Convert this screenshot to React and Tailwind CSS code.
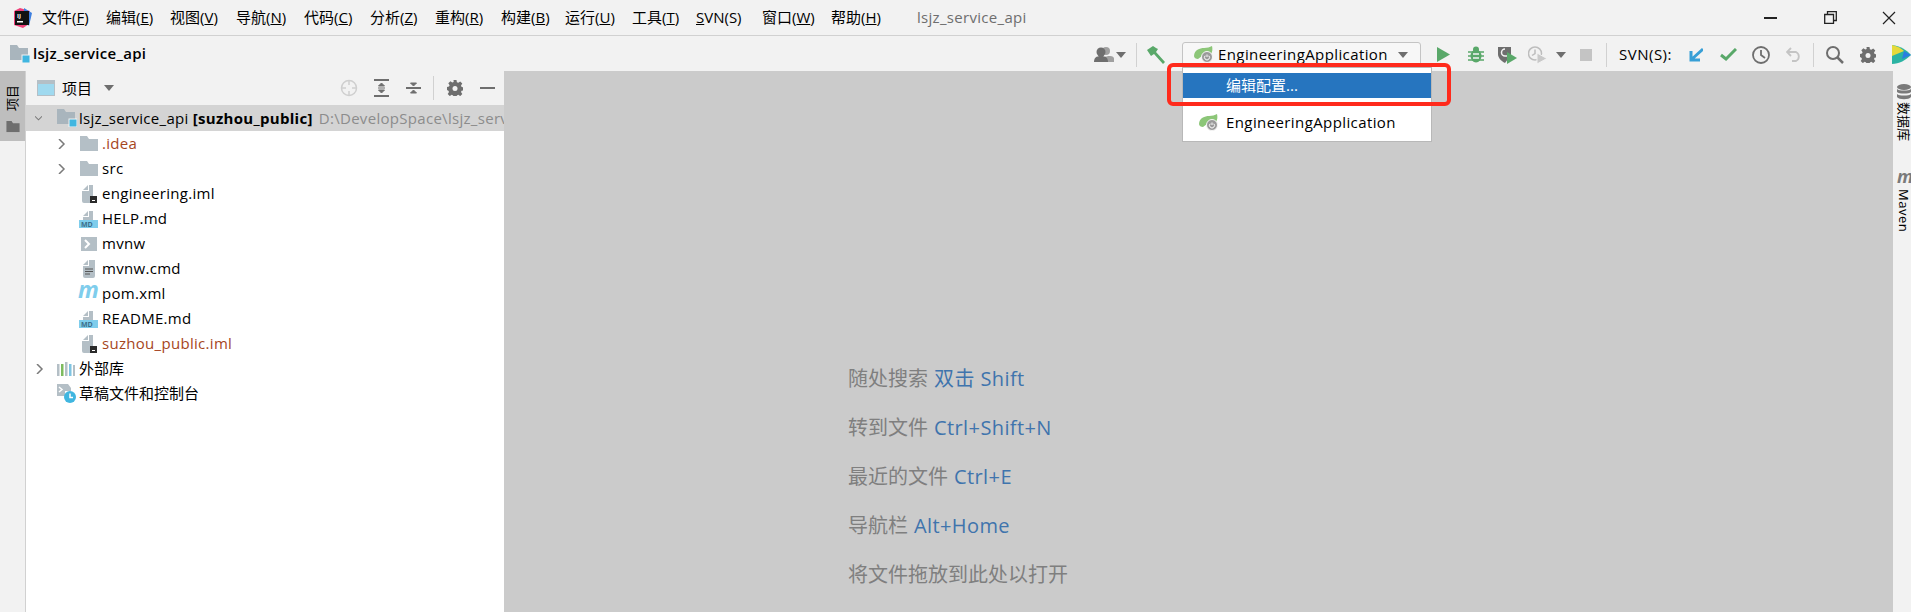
import React from "react";

const font = "font-['Open_Sans','Noto_Sans_CJK_SC',sans-serif]";

const menus = [
    ["文件(", "F", ")", "w-[47px]"],
    ["编辑(", "E", ")", "w-[47px]"],
    ["视图(", "V", ")", "w-[49px]"],
    ["导航(", "N", ")", "w-[51px]"],
    ["代码(", "C", ")", "w-[49px]"],
    ["分析(", "Z", ")", "w-[48px]"],
    ["重构(", "R", ")", "w-[49px]"],
    ["构建(", "B", ")", "w-[47px]"],
    ["运行(", "U", ")", "w-[50px]"],
    ["工具(", "T", ")", "w-[47px]"],
    ["", "S", "VN(S)", "w-[49px]"],
    ["窗口(", "W", ")", "w-[52px]"],
    ["帮助(", "H", ")", "w-[51px]"],
];

const Folder = ({ dark }) => (
    <svg width="18" height="15" viewBox="0 0 18 15">
        <path d="M0 0h7l2 3h9v12H0z" fill={dark ? "#6e6e6e" : "#b4bfc6"} />
    </svg>
);

const ModuleFolder = () => (
    <svg width="20" height="18" viewBox="0 0 20 18">
        <path d="M0 0h7l2 3h9v12H0z" fill="#a9b5bd" />
        <rect x="12" y="10" width="8" height="8" fill="#40b6e0" stroke="#f2f2f2" strokeWidth="1" />
    </svg>
);

const Iml = () => (
    <svg width="16" height="18" viewBox="0 0 16 18">
        <path d="M2 5l5-5v5z" fill="#b4bfc6" />
        <path d="M8 0h4v9H8zM1 6h7v3h4v3H9v6H3a2 2 0 0 1-2-2z" fill="#b4bfc6" />
        <rect x="9" y="11" width="7" height="7" fill="#2b2b2b" />
        <rect x="11" y="15" width="3" height="1" fill="#fff" />
    </svg>
);

const Md = () => (
    <svg width="19" height="18" viewBox="0 0 19 18">
        <path d="M4 6l5-5v5zM10 1h4v9H4V7h6z" fill="#b4bfc6" />
        <rect x="0" y="10" width="19" height="8" fill="#7fcdec" />
        <text x="2" y="17" fontSize="7" fontWeight="700" fill="#3d6f8a" fontFamily="Open Sans">MD</text>
    </svg>
);

const Script = () => (
    <svg width="18" height="14" viewBox="0 0 18 14">
        <rect width="16" height="14" x="1" fill="#b4bfc6" />
        <path d="M5 3l4 4-4 4" fill="none" stroke="#fff" strokeWidth="2" />
    </svg>
);

const Cmd = () => (
    <svg width="14" height="18" viewBox="0 0 14 18">
        <path d="M1 5l5-5v5z" fill="#b4bfc6" />
        <path d="M7 0h6v16a2 2 0 0 1-2 2H3a2 2 0 0 1-2-2V6h6z" fill="#b4bfc6" />
        <path d="M3 9h8M3 11.500h8M3 14h5" stroke="#555" strokeWidth="1" />
    </svg>
);

const Chevron = ({ open }) => (
    <svg width="10" height="10" viewBox="0 0 10 10">
        <path d={open ? "M0 2.500l5 5 5-5" : "M1 0l5 5-5 5"} fill="none" stroke="#7a7a7a" strokeWidth="1.500" />
    </svg>
);

const Libs = () => (
    <svg width="18" height="14" viewBox="0 0 18 14">
        <rect x="0" y="2" width="2.500" height="12" fill="#b4bfc6" />
        <rect x="4" y="2" width="2.500" height="12" fill="#7dbb5f" />
        <rect x="8" y="0" width="2.500" height="14" fill="#b4bfc6" />
        <rect x="12" y="2" width="2.500" height="12" fill="#7fc4e2" />
        <rect x="16" y="3" width="2" height="11" fill="#b4bfc6" />
    </svg>
);

const Scratch = () => (
    <svg width="19" height="19" viewBox="0 0 19 19">
        <path d="M0 0h11l3 4v3H8v5H0z" fill="#b4bfc6" />
        <path d="M2 3l3 2.500L2 8" fill="none" stroke="#fff" strokeWidth="1.500" />
        <circle cx="13" cy="13" r="6" fill="#40b6e0" />
        <path d="M13 9.500V13.500h3" fill="none" stroke="#fff" strokeWidth="1.500" />
    </svg>
);

const Spring = () => (
    <svg width="20" height="17" viewBox="0 0 20 17">
        <path d="M0 10C0 4 6 2 10 2c3 0 6-1 8-2 1 4 0 8-3 10H8l-4 3C2 13 0 12 0 10z" fill="#8cc678" />
        <circle cx="13" cy="11" r="5.500" fill="#9a9a9a" stroke="#f7f7f7" strokeWidth="1" />
        <path d="M13 8.500v2.500M11.200 9.700a2.500 2.500 0 1 0 3.600 0" fill="none" stroke="#fff" strokeWidth="1" />
    </svg>
);

const Gear = ({ size = 16 }) => (
    <svg width={size} height={size} viewBox="0 0 16 16">
        <path d="M6.500 0h3l.4 2.200 1.400.6L13.200 1.500l2.100 2.100-1.300 1.900.6 1.400 2.200.4v3l-2.200.4-.6 1.400 1.300 1.900-2.100 2.100-1.900-1.300-1.400.6-.4 2.200h-3l-.4-2.200-1.400-.6-1.900 1.300-2.100-2.100 1.300-1.900-.6-1.400L-.2 10V7l2.200-.4.6-1.400-1.300-1.900 2.100-2.100 1.900 1.300 1.400-.6z" fill="#6e6e6e" />
        <circle cx="8" cy="8.500" r="2.500" fill="#f2f2f2" />
    </svg>
);

const Caret = () => (
    <svg width="10" height="6" viewBox="0 0 10 6"><path d="M0 0h10L5 6z" fill="#6e6e6e" /></svg>
);

const Sep = () => <div className="w-px h-[24px] bg-[#d1d1d1]"></div>;

const rows = [
    { label: ".idea", icon: <Folder />, arrow: true, color: "text-[#a6461d]" },
    { label: "src", icon: <Folder />, arrow: true },
    { label: "engineering.iml", icon: <Iml /> },
    { label: "HELP.md", icon: <Md /> },
    { label: "mvnw", icon: <Script /> },
    { label: "mvnw.cmd", icon: <Cmd /> },
    { label: "pom.xml", icon: <span className="font-['Open_Sans'] italic font-bold text-[23px] leading-none text-[#7fcdec] -mt-2">m</span> },
    { label: "README.md", icon: <Md /> },
    { label: "suzhou_public.iml", icon: <Iml />, color: "text-[#a6461d]" },
];

const hints = [
    ["随处搜索", "双击 Shift"],
    ["转到文件", "Ctrl+Shift+N"],
    ["最近的文件", "Ctrl+E"],
    ["导航栏", "Alt+Home"],
    ["将文件拖放到此处以打开", ""],
];

const App = () => {
    return (
        <div className={`relative w-[1911px] h-[612px] overflow-hidden bg-[#f2f2f2] text-[15px] text-black ${font}`}>
            <div className="h-[36px] flex items-center border-b border-[#d1d1d1]">
                <div className="w-[42px] flex justify-center pl-[1px]">
                    <svg width="20" height="20" viewBox="0 0 20 20">
                        <path d="M2 3l6-3 10 3-1 13-6 4-9-3z" fill="#f0407a" />
                        <path d="M12 0l8 5-3 13-5-6z" fill="#3d7fe0" />
                        <rect x="3" y="3" width="14" height="14" fill="#111" />
                        <text x="5" y="10" fontSize="6" fontWeight="700" fill="#fff" fontFamily="Open Sans">IJ</text>
                        <rect x="5" y="13" width="6" height="1.500" fill="#fff" />
                    </svg>
                </div>
                <div className="flex gap-[17px]">
                    {menus.map(m => (
                        <span key={m[1]} className={`${m[3]} whitespace-nowrap`}>{m[0]}<span className="underline">{m[1]}</span>{m[2]}</span>
                    ))}
                </div>
                <span className="ml-[35px] text-[#6e6e6e] tracking-[0.3px]">lsjz_service_api</span>
                <div className="ml-auto flex items-center">
                    <svg width="13" height="2" className="mr-[47px]"><rect width="13" height="2" fill="#222" /></svg>
                    <svg width="13" height="13" viewBox="0 0 13 13" className="mr-[45px]">
                        <path d="M.7 3.500h8.800v8.800H.7zM3.500 3V.7h8.800v8.800H10" fill="none" stroke="#222" strokeWidth="1.300" />
                    </svg>
                    <svg width="14" height="14" viewBox="0 0 14 14" className="mr-[15px]">
                        <path d="M1 1l12 12M13 1L1 13" stroke="#222" strokeWidth="1.200" />
                    </svg>
                </div>
            </div>

            <div className="h-[35px] flex items-center">
                <div className="w-[33px] pl-[10px]"><ModuleFolder /></div>
                <span className="font-semibold tracking-[0.3px]">lsjz_service_api</span>
                <div className="ml-auto flex items-center h-full pt-[2px]">
                    <svg width="20" height="15" viewBox="0 0 20 15">
                        <circle cx="12" cy="4" r="4" fill="#a0a0a0" />
                        <path d="M8 15c0-4 3-6 8-6s4 3 4 6z" fill="#a0a0a0" />
                        <circle cx="7" cy="5" r="4.500" fill="#6e6e6e" />
                        <path d="M0 15c0-4 2-6 7-6s7 2 7 6z" fill="#6e6e6e" />
                    </svg>
                    <div className="ml-[2px] mr-[10px]"><Caret /></div>
                    <Sep />
                    <svg width="20" height="18" viewBox="0 0 20 18" className="ml-[10px] mr-[15px]">
                        <path d="M0 4l6-4 3 2 2 1-2 3 9 10-2 2L7 8 4 10z" fill="#59a869" />
                    </svg>
                    <div className="w-[239px] h-[26px] bg-[#f7f7f7] border border-[#c4c4c4] rounded-[3px] flex items-center pl-[11px] pr-[12px]">
                        <Spring />
                        <span className="ml-[4px] tracking-[0.4px]">EngineeringApplication</span>
                        <div className="ml-auto"><Caret /></div>
                    </div>
                    <svg width="13" height="15" viewBox="0 0 13 15" className="ml-[16px]"><path d="M0 0l13 7.500L0 15z" fill="#59a869" /></svg>
                    <svg width="16" height="17" viewBox="0 0 16 17" className="ml-[18px]">
                        <ellipse cx="8" cy="10" rx="5.500" ry="6.500" fill="#59a869" />
                        <circle cx="8" cy="3.500" r="3" fill="#59a869" />
                        <path d="M0 6h16M0 10h16M0 14h16" stroke="#59a869" strokeWidth="1.500" />
                        <path d="M5 8h6M5 12h6" stroke="#f2f2f2" strokeWidth="1.500" />
                    </svg>
                    <svg width="19" height="18" viewBox="0 0 19 18" className="ml-[14px]">
                        <path d="M0 1h13v8l-6 8C3 15 0 12 0 8z" fill="#6e6e6e" />
                        <path d="M7 3a3.500 3.500 0 0 0 0 7h3" fill="none" stroke="#f2f2f2" strokeWidth="1.500" />
                        <path d="M9 6l10 6-10 6z" fill="#59a869" />
                    </svg>
                    <svg width="19" height="18" viewBox="0 0 19 18" className="ml-[11px]">
                        <circle cx="7" cy="7.500" r="6.500" fill="none" stroke="#bdbdbd" strokeWidth="1.500" />
                        <path d="M7 3.500v4l-3 2" fill="none" stroke="#bdbdbd" strokeWidth="1.500" />
                        <path d="M9 7l10 5.500L9 18z" fill="#c9c9c9" stroke="#f2f2f2" />
                    </svg>
                    <div className="ml-[9px]"><Caret /></div>
                    <div className="ml-[14px] w-[12px] h-[12px] bg-[#c4c4c4]"></div>
                    <div className="ml-[14px]"><Sep /></div>
                    <span className="ml-[12px] w-[54px] whitespace-nowrap tracking-[0.5px]">SVN(S):</span>
                    <svg width="15" height="15" viewBox="0 0 15 15" className="ml-[15px]">
                        <path d="M15 2L4 12M3 4v9h9" fill="none" stroke="#389fd6" strokeWidth="3" />
                    </svg>
                    <svg width="17" height="13" viewBox="0 0 17 13" className="ml-[17px]">
                        <path d="M1 7l5 4L16 1" fill="none" stroke="#59a869" strokeWidth="3" />
                    </svg>
                    <svg width="18" height="18" viewBox="0 0 18 18" className="ml-[15px]">
                        <circle cx="9" cy="9" r="8" fill="none" stroke="#6e6e6e" strokeWidth="1.800" />
                        <path d="M9 4v5l4 3" fill="none" stroke="#6e6e6e" strokeWidth="1.800" />
                    </svg>
                    <svg width="16" height="15" viewBox="0 0 16 15" className="ml-[16px]">
                        <path d="M5 1L1 5l4 4M1 5h9a5 5 0 0 1 0 9H6" fill="none" stroke="#c4c4c4" strokeWidth="1.800" />
                    </svg>
                    <div className="ml-[11px]"><Sep /></div>
                    <svg width="18" height="18" viewBox="0 0 18 18" className="ml-[12px]">
                        <circle cx="7" cy="7" r="6" fill="none" stroke="#6e6e6e" strokeWidth="2" />
                        <path d="M11 11l6 6" stroke="#6e6e6e" strokeWidth="2.500" />
                    </svg>
                    <div className="ml-[16px]"><Gear /></div>
                    <svg width="19" height="19" viewBox="0 0 19 19" className="ml-[16px]">
                        <path d="M0 0c8 1 15 5 19 10-5 5-12 9-19 9z" fill="#2bb3a3" />
                        <path d="M0 0c5 1 9 3 12 6L0 11z" fill="#e6d93a" />
                        <path d="M12 6l7 4-9 4z" fill="#2a7de1" />
                    </svg>
                </div>
            </div>

            <div className="h-[541px] flex">
                <div className="w-[25px] shrink-0">
                    <div className="h-[70px] bg-[#bebebe] flex flex-col items-center pt-[14px]">
                        <span className="[writing-mode:vertical-rl] [text-orientation:sideways] rotate-180 text-[13px] leading-none">项目</span>
                        <div className="mt-[8px] scale-75"><Folder dark /></div>
                    </div>
                </div>

                <div className="w-[479px] shrink-0 bg-white border-l border-[#d1d1d1]">
                    <div className="h-[34px] bg-[#f2f2f2] flex items-center pl-[11px] pr-[9px]">
                        <svg width="18" height="16" viewBox="0 0 18 16">
                            <rect x=".5" y=".5" width="17" height="15" fill="#9fd9ef" stroke="#b4bfc6" />
                            <rect x="1" y="1" width="16" height="3" fill="#b4bfc6" />
                        </svg>
                        <span className="ml-[7px]">项目</span>
                        <div className="ml-[12px]"><Caret /></div>
                        <div className="ml-auto flex items-center">
                            <svg width="18" height="18" viewBox="0 0 18 18">
                                <circle cx="9" cy="9" r="7.500" fill="none" stroke="#cfcfcf" strokeWidth="1.500" />
                                <path d="M9 1v5M9 12v5M1 9h5M12 9h5" stroke="#cfcfcf" strokeWidth="1.500" />
                            </svg>
                            <svg width="15" height="18" viewBox="0 0 15 18" className="ml-[16px]">
                                <path d="M0 1h15M0 17h15" stroke="#6e6e6e" strokeWidth="2" />
                                <path d="M7.500 4l3 3h-6zM7.500 14l3-3h-6zM4 9h7" fill="#6e6e6e" stroke="#6e6e6e" />
                            </svg>
                            <svg width="15" height="16" viewBox="0 0 15 16" className="ml-[17px]">
                                <path d="M0 8h15" stroke="#6e6e6e" strokeWidth="2" />
                                <path d="M7.500 6l3-3h-6zM7.500 10l3 3h-6z" fill="#6e6e6e" stroke="#6e6e6e" />
                            </svg>
                            <div className="w-px h-[24px] bg-[#d1d1d1] ml-[12px] mr-[13px]"></div>
                            <Gear />
                            <svg width="15" height="2" className="ml-[17px]"><rect width="15" height="2" fill="#6e6e6e" /></svg>
                        </div>
                    </div>

                    <div className="h-[26px] bg-[#d4d4d4] flex items-center whitespace-nowrap overflow-hidden">
                        <div className="w-[7px] ml-[9px] mr-[15px] flex"><Chevron open /></div>
                        <div className="w-[22px] shrink-0"><ModuleFolder /></div>
                        <span className="tracking-[0.3px]">lsjz_service_api <b className="font-bold">[suzhou_public]</b></span>
                        <span className="ml-[6px] text-[#8c8c8c] tracking-[0.3px]">D:\DevelopSpace\lsjz_service_api</span>
                    </div>

                    {rows.map(r => (
                        <div key={r.label} className="h-[25px] flex items-center pl-[32px]">
                            <div className="w-[21px]">{r.arrow && <Chevron />}</div>
                            <div className="w-[19px] flex justify-center">{r.icon}</div>
                            <span className={`ml-[4px] tracking-[0.3px] ${r.color || ""}`}>{r.label}</span>
                        </div>
                    ))}
                    <div className="h-[25px] flex items-center pl-[10px]">
                        <div className="w-[21px]"><Chevron /></div>
                        <div className="w-[22px]"><Libs /></div>
                        <span>外部库</span>
                    </div>
                    <div className="h-[25px] flex items-center pl-[31px]">
                        <div className="w-[22px]"><Scratch /></div>
                        <span>草稿文件和控制台</span>
                    </div>
                </div>

                <div className="flex-1 bg-[#cbcbcb] pl-[344px] pt-[283px] text-[20px] text-[#7f7f7f]">
                    {hints.map(h => (
                        <div key={h[0]} className="h-[49px] flex items-center gap-[6px] whitespace-nowrap">
                            <span>{h[0]}</span>
                            <span className="text-[#3f74ad] tracking-[0.4px]">{h[1]}</span>
                        </div>
                    ))}
                </div>

                <div className="w-[18px] shrink-0 flex flex-col items-start pl-[4px] pt-[13px] overflow-hidden">
                    <svg width="14" height="16" viewBox="0 0 14 16" className="shrink-0">
                        <ellipse cx="7" cy="3" rx="7" ry="3" fill="#7a7a7a" />
                        <path d="M0 5c2 2 12 2 14 0v3c-2 2-12 2-14 0zM0 10c2 2 12 2 14 0v3c-2 3-12 3-14 0z" fill="#7a7a7a" />
                    </svg>
                    <span className="mt-[2px] [writing-mode:vertical-rl] [text-orientation:sideways] text-[13px] leading-none">数据库</span>
                    <span className="mt-[26px] font-bold italic text-[18px] leading-none text-[#7a7a7a]">m</span>
                    <span className="mt-[4px] [writing-mode:vertical-rl] [text-orientation:sideways] text-[13px] leading-none tracking-[0.5px]">Maven</span>
                </div>
            </div>

            <div className="absolute left-[1182px] top-[67px] w-[250px] h-[75px] bg-white border border-[#b8b8b8]">
                <div className="mt-[5px] h-[25px] bg-[#2675bf] text-white flex items-center pl-[43px]">编辑配置...</div>
                <div className="mt-[4px] mx-0 h-px bg-[#d1d1d1]"></div>
                <div className="mt-[7px] h-[25px] flex items-center pl-[16px]">
                    <Spring />
                    <span className="ml-[7px] tracking-[0.4px]">EngineeringApplication</span>
                </div>
            </div>
            <div className="absolute left-[1167px] top-[63px] w-[284px] h-[43px] border-[4px] border-[#ff2a1c] rounded-[6px]"></div>
        </div>
    )
}

export default App;
